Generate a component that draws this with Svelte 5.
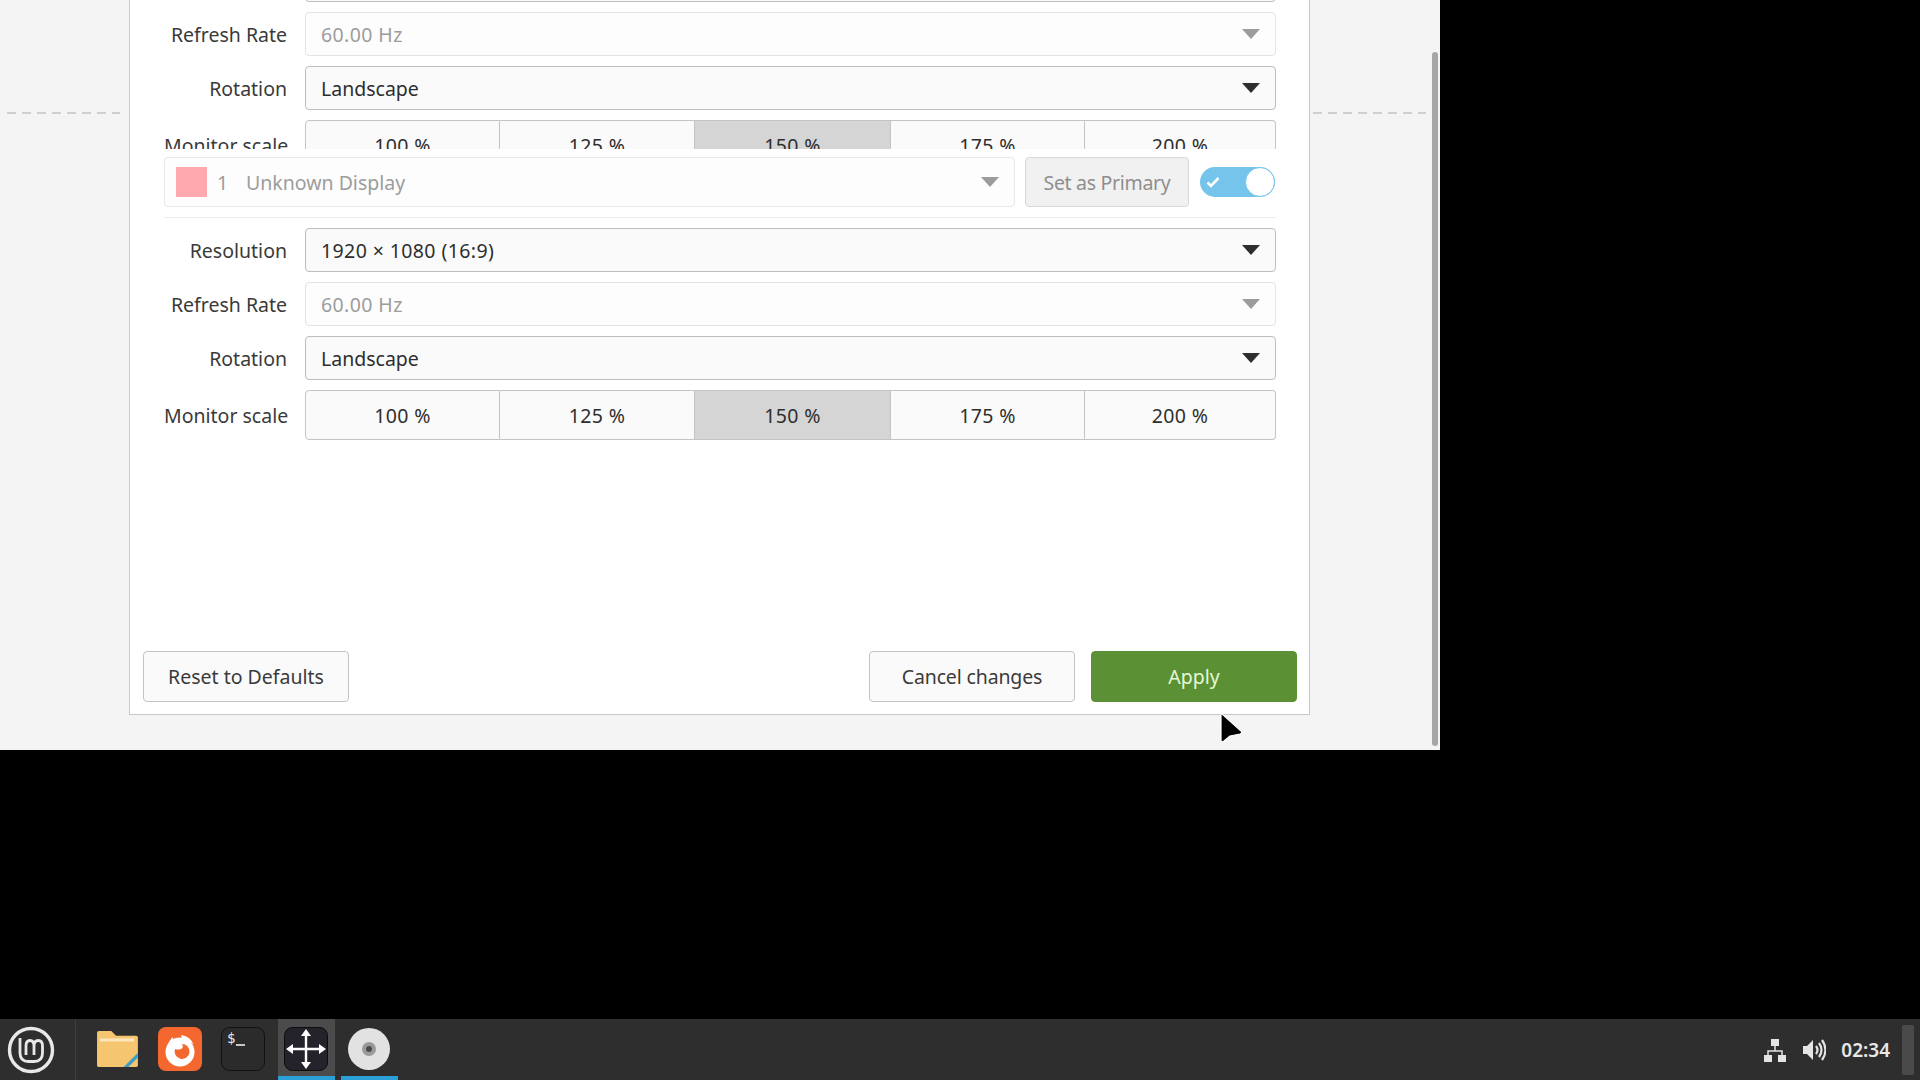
<script>
	const scales = ['100 %', '125 %', '150 %', '175 %', '200 %'];
	const widths = [195, 195, 196, 194, 191];
</script>

{#snippet chevron()}
	<svg class="chevron" viewBox="0 0 18 10" width="18" height="10"><path d="M0 0h18L9 10z" fill="currentColor" /></svg>
{/snippet}

{#snippet select(label, value, disabled)}
	<span class="label">{label}</span>
	<div class="select" class:disabled>
		<span class:digits={/^\d/.test(value)}>{value}</span>
		{@render chevron()}
	</div>
{/snippet}

{#snippet scaleRow()}
	<span class="label">Monitor scale</span>
	<div class="scale">
		{#each scales as s, i}
			<button class:on={i === 2} style="width: {widths[i]}px">{s}</button>
		{/each}
	</div>
{/snippet}

<div class="screen">
	<div class="window">
		<div class="gutter left"><div class="dashes"></div></div>
		<section class="panel">
			<div class="clip">
				<div class="form shifted">
					{@render select('Resolution', '1920 × 1080 (16:9)', false)}
					{@render select('Refresh Rate', '60.00 Hz', true)}
					{@render select('Rotation', 'Landscape', false)}
					{@render scaleRow()}
				</div>
			</div>
			<div class="head">
				<div class="display">
					<i class="swatch"></i>
					<span class="num">1</span>
					<span class="name">Unknown Display</span>
					{@render chevron()}
				</div>
				<button class="primary">Set as Primary</button>
				<div class="toggle">
					<svg viewBox="0 0 14 12" width="14" height="12"><path d="M1.500 6.500l3.500 3.500 7.500-8" fill="none" stroke="#fff" stroke-width="2.600" /></svg>
					<i class="knob"></i>
				</div>
			</div>
			<div class="form">
				{@render select('Resolution', '1920 × 1080 (16:9)', false)}
				{@render select('Refresh Rate', '60.00 Hz', true)}
				{@render select('Rotation', 'Landscape', false)}
				{@render scaleRow()}
			</div>
			<div class="actions">
				<button class="btn">Reset to Defaults</button>
				<span class="grow"></span>
				<button class="btn cancel">Cancel changes</button>
				<button class="btn apply">Apply</button>
			</div>
		</section>
		<div class="gutter right"><div class="dashes"></div></div>
		<div class="scrollbar"></div>
		<svg class="cursor" viewBox="0 0 24 32" width="24" height="32">
			<path d="M2 1v27q0 3 3 1l6-5 10-2q3-1 1-3z" fill="#000" stroke="#fff" stroke-width="1.200" stroke-linejoin="round" />
		</svg>
	</div>

	<footer class="taskbar">
		<button class="task menu">
			<svg viewBox="0 0 50 50" width="50" height="50">
				<circle cx="25" cy="25" r="21.500" fill="none" stroke="#e8e8e8" stroke-width="3.400" />
				<path d="M14 13v15q0 8.500 8.500 8.500h5.500q8.500 0 8.500-8.500v-7q0-5.500-4.200-5.500-4.300 0-4.300 5.500v9M28 21q0-5.500-4-5.500t-4 5.500v9" fill="none" stroke="#e8e8e8" stroke-width="2.800" stroke-linejoin="round" />
			</svg>
		</button>
		<i class="sep"></i>
		<div class="launchers">
			<button class="task">
				<svg viewBox="0 0 44 40" width="42" height="38">
					<path d="M1 3q0-2 2-2h13l5 5h21q2 0 2 2v29q0 2-2 2H3q-2 0-2-2z" fill="#f6c56f" />
					<path d="M4 9h36v3H4z" fill="#fbe6bd" />
					<path d="M29 39l15-15v5L34 39z" fill="#3d9fc4" />
				</svg>
			</button>
			<button class="task">
				<svg viewBox="0 0 44 44" width="44" height="44">
					<rect width="44" height="44" rx="8" fill="#f4682f" />
					<circle cx="22" cy="25" r="14.500" fill="#fff" />
					<path d="M24 17a7.500 7.500 0 1 1-7 5q3 1 6 0 3-1 1-5z" fill="#f4682f" />
					<path d="M9 22q1-8 6-12 0 4 3 5l-6 8z" fill="#fff" />
					<path d="M23 8q9 1 13 10-5-5-11-4z" fill="#fff" />
				</svg>
			</button>
			<button class="task">
				<svg viewBox="0 0 44 44" width="44" height="44">
					<rect x=".5" y=".5" width="43" height="43" rx="8" fill="#2b2b2b" stroke="#111" />
					<text x="6" y="16" class="prompt">$</text>
					<path d="M15 18h9" stroke="#eee" stroke-width="1.600" />
				</svg>
			</button>
			<button class="task active">
				<svg viewBox="0 0 44 44" width="44" height="44">
					<rect x=".5" y=".5" width="43" height="43" rx="8" fill="#24222b" stroke="#0c0c0c" />
					<path d="M22 8v28M8 22h28" stroke="#fff" stroke-width="2.400" />
					<path d="M22 2l5 7H17zM22 42l5-7H17zM2 22l7-5v10zM42 22l-7-5v10z" fill="#fff" />
				</svg>
			</button>
			<button class="task running">
				<svg viewBox="0 0 44 44" width="44" height="44">
					<circle cx="22" cy="22" r="21" fill="#e2e2e2" />
					<circle cx="22" cy="22" r="7" fill="#9a9a9a" />
					<circle cx="22" cy="22" r="3" fill="#4a4a4a" />
				</svg>
			</button>
		</div>
		<span class="grow"></span>
		<svg class="tray" viewBox="0 0 24 24" width="24" height="24">
			<path d="M8 1h8v7H8zM1 17h8v7H1zM15 17h8v7h-8z" fill="#e4e4e4" />
			<path d="M12 8v5M5 17v-4h14v4" fill="none" stroke="#e4e4e4" stroke-width="1.500" />
		</svg>
		<svg class="tray vol" viewBox="0 0 24 22" width="24" height="22">
			<path d="M1 7h4l6-6v20l-6-6H1z" fill="#e4e4e4" />
			<path d="M14 7q3 4 0 8M17 4q5 7 0 14M20 1q7 10 0 20" fill="none" stroke="#e4e4e4" stroke-width="2.200" />
		</svg>
		<span class="clock">02:34</span>
		<i class="desktop"></i>
	</footer>
</div>

<style>
	:global(body) {
		background: #000;
	}

	.screen {
		display: flex;
		flex-direction: column;
		height: 1080px;
		overflow: hidden;
		font-family: 'Noto Sans', sans-serif;
		font-size: 19.5px;
		color: #3a3a3a;
	}

	.window {
		position: relative;
		display: flex;
		width: 1440px;
		height: 750px;
		background: #f4f4f4;
	}

	.gutter {
		width: 129px;
		padding-top: 112px;
		box-sizing: border-box;
	}

	.gutter.left {
		padding-left: 7px;
	}

	.gutter.right {
		flex: 1;
		padding-left: 3px;
		padding-right: 15px;
	}

	.dashes {
		width: 113px;
		height: 2px;
		background: repeating-linear-gradient(90deg, #cfcfcf 0 9px, transparent 9px 15px);
	}

	.panel {
		display: flex;
		flex-direction: column;
		width: 1181px;
		height: 715px;
		background: #fff;
		border: 1px solid #c8c8c8;
		border-top: 0;
		box-sizing: border-box;
	}

	.clip {
		height: 149px;
		overflow: hidden;
		flex-shrink: 0;
	}

	.form {
		display: grid;
		grid-template-columns: 123px 971px;
		gap: 10px 18px;
		align-items: center;
		margin-left: 34px;
		margin-top: 10px;
	}

	.form.shifted {
		margin-top: -42px;
	}

	.label {
		text-align: right;
		white-space: nowrap;
	}

	.select {
		display: flex;
		align-items: center;
		justify-content: space-between;
		height: 44px;
		box-sizing: border-box;
		padding: 0 15px 0 15px;
		background: #fafafa;
		border: 1px solid #bdbdbd;
		border-radius: 4px;
		color: #2e2e2e;
	}

	.digits {
		letter-spacing: 0.4px;
	}

	.select.disabled,
	.display {
		background: #fdfdfd;
		border-color: #e4e4e4;
		color: #9c9c9c;
	}

	.chevron {
		flex-shrink: 0;
	}

	.scale {
		display: flex;
		height: 50px;
	}

	.scale button {
		box-sizing: border-box;
		height: 50px;
		background: #fafafa;
		border: 1px solid #c4c4c4;
		border-left: 0;
		font: inherit;
		letter-spacing: 0.4px;
		color: #2e2e2e;
	}

	.scale button:first-child {
		border-left: 1px solid #c4c4c4;
		border-radius: 4px 0 0 4px;
	}

	.scale button:last-child {
		border-radius: 0 4px 4px 0;
	}

	.scale button.on {
		background: #d5d5d5;
	}

	.head {
		display: flex;
		align-items: flex-end;
		height: 69px;
		margin: 0 34px;
		width: 1112px;
		padding-bottom: 10px;
		box-sizing: border-box;
		border-bottom: 1px solid #ececec;
		flex-shrink: 0;
	}

	.display {
		display: flex;
		align-items: center;
		width: 851px;
		height: 50px;
		box-sizing: border-box;
		padding: 0 15px 0 11px;
		border: 1px solid #e8e8e8;
		border-radius: 4px;
	}

	.swatch {
		width: 31px;
		height: 30px;
		background: #ffa8ae;
	}

	.num {
		margin-left: 10px;
		width: 29px;
	}

	.name {
		flex: 1;
	}

	.primary {
		width: 164px;
		height: 50px;
		margin-left: 10px;
		background: #f1f1f1;
		border: 1px solid #d8d8d8;
		border-radius: 4px;
		font: inherit;
		letter-spacing: -0.3px;
		color: #8e8e8e;
	}

	.toggle {
		display: flex;
		align-items: center;
		justify-content: space-between;
		width: 75px;
		height: 30px;
		margin-left: 11px;
		margin-bottom: 10px;
		padding: 0 0 0 6px;
		box-sizing: border-box;
		background: #74c4ec;
		border-radius: 15px;
	}

	.knob {
		width: 28px;
		height: 28px;
		border: 1px solid #74c4ec;
		border-radius: 50%;
		background: #fff;
	}

	.actions {
		display: flex;
		gap: 16px;
		margin-top: auto;
		padding: 0 12px 12px 13px;
	}

	.btn {
		width: 206px;
		height: 51px;
		background: #fafafa;
		border: 1px solid #c4c4c4;
		border-radius: 4px;
		font: inherit;
		color: #3a3a3a;
	}

	.btn.cancel {
		letter-spacing: -0.15px;
	}

	.btn.apply {
		background: #5b9134;
		border-color: #5b9134;
		color: #e6f7d6;
	}

	.grow {
		flex: 1;
	}

	.scrollbar {
		position: absolute;
		left: 1432px;
		top: 52px;
		width: 6px;
		height: 694px;
		background: #a6a6a6;
		border-radius: 3px;
	}

	.cursor {
		position: absolute;
		left: 1219px;
		top: 712px;
	}

	.taskbar {
		display: flex;
		align-items: center;
		height: 61px;
		margin-top: auto;
		background: #2e2e2e;
		color: #e8e8e8;
	}

	.task {
		display: flex;
		align-items: center;
		justify-content: center;
		padding: 0;
		height: 61px;
		background: none;
		border: 0;
		box-sizing: border-box;
	}

	.menu {
		width: 62px;
	}

	.sep {
		width: 1px;
		height: 61px;
		margin: 0 13px;
		background: #3f3f3f;
	}

	.launchers {
		display: flex;
		gap: 6px;
	}

	.launchers .task {
		width: 57px;
		padding-right: 2px;
		border-bottom: 4px solid transparent;
		border-top: 2px solid transparent;
	}

	.task.active {
		background: #4b4b4b;
		border-bottom-color: #2a9fd8 !important;
	}

	.task.running {
		border-bottom-color: #2a9fd8 !important;
	}

	.prompt {
		font-family: 'DejaVu Sans Mono', monospace;
		font-size: 14px;
		fill: #eee;
	}

	.tray.vol {
		margin-left: 15px;
	}

	.clock {
		margin-left: 15px;
		font-size: 19px;
		font-weight: 600;
		color: #e8e8e8;
	}

	.desktop {
		width: 12px;
		height: 50px;
		margin: 0 6px 0 12px;
		background: #4a4a4a;
		border-radius: 2px;
	}
</style>
